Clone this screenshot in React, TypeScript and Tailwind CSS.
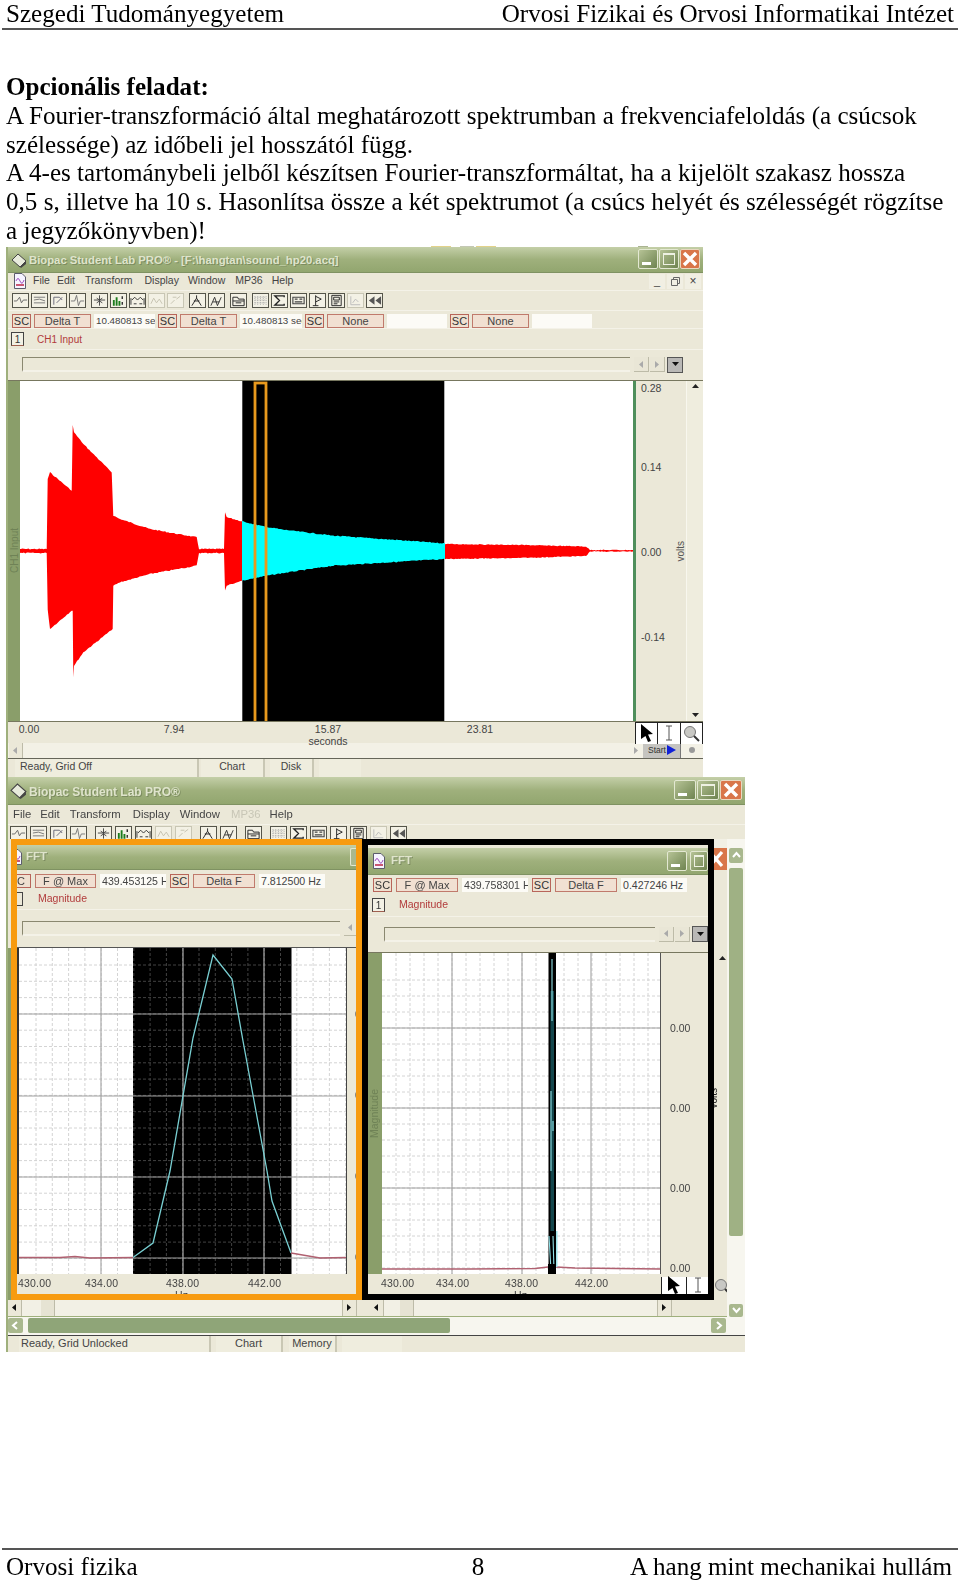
import React from "react";

const serif = "font-['Liberation_Serif',serif]";

/* ---------- waveform helpers ---------- */
type P = [number, number];
const z = (x: number, y: number): P => [x / 3, y / 3 + 370];
let seed = 7;
const rnd = () => {
  seed = (seed * 9301 + 49297) % 233280;
  return seed / 233280 - 0.5;
};
function jag(pts: P[], amp: number): P[] {
  const out: P[] = [];
  for (let i = 0; i < pts.length - 1; i++) {
    const [x0, y0] = pts[i];
    const [x1, y1] = pts[i + 1];
    const n = Math.max(1, Math.round(Math.abs(x1 - x0) / 1.5));
    for (let k = 0; k < n; k++) {
      const t = k / n;
      out.push([x0 + (x1 - x0) * t, y0 + (y1 - y0) * t + (Math.abs(x1 - x0) > 1.5 ? rnd() * amp : 0)]);
    }
  }
  out.push(pts[pts.length - 1]);
  return out;
}
const poly = (top: P[], bot: P[], amp = 1) =>
  [...jag(top, amp), ...jag(bot, amp).reverse()].map((p) => `${p[0].toFixed(1)},${p[1].toFixed(1)}`).join(" ");

const redA = poly(
  [z(58, 540), z(140, 540), z(143, 330), z(150, 310), z(215, 365), z(218, 168), z(222, 190), z(250, 225), z(335, 310), z(340, 440), z(360, 450), z(450, 480), z(590, 505), z(597, 540), z(672, 540), z(675, 430), z(680, 445), z(726, 457)],
  [z(58, 552), z(140, 552), z(143, 720), z(150, 780), z(215, 725), z(218, 725), z(220, 925), z(222, 890), z(250, 850), z(338, 780), z(340, 650), z(360, 640), z(450, 615), z(590, 590), z(597, 552), z(672, 552), z(675, 665), z(680, 650), z(726, 635)]
);
const cyan = poly(
  [z(726, 457), z(790, 472), z(850, 482), z(1000, 500), z(1335, 523)],
  [z(726, 635), z(790, 622), z(850, 612), z(1000, 590), z(1335, 570)]
);
const redC = poly(
  [[445, 545], [520, 546], [586, 547.5], [590, 551], [636, 551]],
  [[445, 560], [520, 559], [586, 557], [590, 552.5], [636, 552.5]],
  0.8
);

/* ---------- small chrome parts ---------- */
function WinBtns({ small = false }: { small?: boolean }) {
  const s = small ? "w-[20px] h-[20px]" : "w-[22px] h-[20px]";
  return (
    <div className="flex gap-[1px] items-center">
      <div className={`${s} rounded-[2px] border border-[#e3e8d2] bg-gradient-to-br from-[#b6c396] to-[#6f8450] flex items-end pl-[3px] pb-[3px]`}>
        <div className="w-[9px] h-[3px] bg-white" />
      </div>
      <div className={`${s} rounded-[2px] border border-[#e3e8d2] bg-gradient-to-br from-[#b6c396] to-[#6f8450] p-[3px]`}>
        <div className="w-full h-full border border-[#eef1e2] border-t-2" />
      </div>
      <div className={`${s} rounded-[2px] border border-[#e8d8c0] bg-[#d9764a] flex items-center justify-center`}>
        <svg width="16" height="16" viewBox="0 0 16 16">
          <path d="M2 2 L14 14 M14 2 L2 14" stroke="#fff" strokeWidth="3.4" />
        </svg>
      </div>
    </div>
  );
}

function DocIcon({ cls = "" }: { cls?: string }) {
  return (
    <svg width="14" height="16" viewBox="0 0 14 16" className={`shrink-0 ${cls}`}>
      <path d="M1.5 .5 H9 L12.5 4 V15.5 H1.5 Z" fill="#f6f4ff" stroke="#5c5c6c" />
      <path d="M3 8 Q5 3 7 8 T11 7" fill="none" stroke="#a050c0" />
      <path d="M3 12 H11" stroke="#c03050" strokeWidth="1.6" />
    </svg>
  );
}

const glyphs: Record<string, React.ReactNode> = {
  wave: <path d="M1 7 L4 7 L7 3 L9 9 L11 6 L15 6" fill="none" stroke="#666" />,
  lines: <path d="M2 3 H14 M2 6 L8 5 L14 7 M2 9 H14" fill="none" stroke="#777" />,
  pen: <path d="M3 11 V3 H9 L12 6 M6 9 L12 3" fill="none" stroke="#667" />,
  spike: <path d="M1 7 H5 L7 1 L9 12 L11 7 H15" fill="none" stroke="#777" />,
  cross: <path d="M8 1 V12 M2 6 H14 M5 4 L8 6 L11 4 M5 9 L8 7 L11 9" fill="none" stroke="#444" />,
  bars: (
    <>
      <path d="M3 12 V6 M6 12 V3 M9 12 V7" stroke="#1c7c1c" strokeWidth="2" />
      <path d="M12 2 V5 M12 8 V11" stroke="#222" strokeWidth="1.4" />
    </>
  ),
  hills: <path d="M1 4 V11 M15 4 V11 M2 6 L5 3 L8 6 L11 3 L14 6 M4 10 H7 M10 10 H13" fill="none" stroke="#333" />,
  dimA: <path d="M2 10 L5 4 L8 9 L11 5 L14 10" fill="none" stroke="#c5c2b0" />,
  dimB: <path d="M3 10 L7 6 M9 5 L13 2 M5 3 H9" fill="none" stroke="#c5c2b0" />,
  walk: <path d="M7 1 V4 M2 12 L7 4 L12 12 M4 7 H10" fill="none" stroke="#222" />,
  walk2: <path d="M2 12 L6 3 L9 12 L13 3 M4 8 H11" fill="none" stroke="#333" />,
  folder: <path d="M2 3 H7 L8 5 H14 V12 H2 Z M2 7 H14 M5 9 H11" fill="none" stroke="#222" />,
  table: <path d="M2 2 V11 M5 2 V11 M8 2 V11 M11 2 V11 M14 2 V11 M2 3 H14 M2 6 H14 M2 9 H14" stroke="#aaa" strokeDasharray="1 1" fill="none" />,
  sigma: <path d="M13 3 V1.5 H3 L8 6.5 L3 11.5 H13 V10" fill="none" stroke="#222" strokeWidth="1.4" />,
  calc: <path d="M2 3 H14 V10 H2 Z M4 5 H7 M9 5 H12 M4 8 H12" fill="none" stroke="#444" strokeWidth="1.2" />,
  flag: <path d="M6 1 V12 M3 12 H9 M6 2 L12 5 L6 8" fill="none" stroke="#222" />,
  journal: <path d="M3 1 H13 V12 H3 Z M5 3 H11 V6 H5 Z M5 8 H11 M5 10 H9" fill="none" stroke="#222" />,
  dimC: <path d="M3 2 V11 H13 M5 9 L8 5 L11 8" fill="none" stroke="#bbb" />,
  rew: <path d="M8 2 L2 6.5 L8 11 Z M15 2 L9 6.5 L15 11 Z" fill="#555" />,
};

function Tool({ g, dim = false }: { g: string; dim?: boolean }) {
  return (
    <div className={`w-[17px] h-[15px] border bg-[#f3f1e5] flex items-center justify-center ${dim ? "border-[#c8c6b4]" : "border-[#55554a]"}`}>
      <svg width="15" height="13" viewBox="0 0 16 13">{glyphs[g]}</svg>
    </div>
  );
}

function Toolbar({ wide = false }: { wide?: boolean }) {
  const gap = wide ? "gap-[3px]" : "gap-[2px]";
  const gapBig = wide ? "gap-[8px]" : "gap-[5px]";
  return (
    <div className={`flex ${gapBig}`}>
      <div className={`flex ${gap}`}>
        <Tool g="wave" /><Tool g="lines" /><Tool g="pen" /><Tool g="spike" />
      </div>
      <div className={`flex ${gap}`}>
        <Tool g="cross" /><Tool g="bars" /><Tool g="hills" /><Tool g="dimA" dim /><Tool g="dimB" dim />
      </div>
      <div className={`flex ${gap}`}>
        <Tool g="walk" /><Tool g="walk2" />
      </div>
      <Tool g="folder" />
      <div className={`flex ${gap}`}>
        <Tool g="table" /><Tool g="sigma" /><Tool g="calc" /><Tool g="flag" /><Tool g="journal" /><Tool g="dimC" dim /><Tool g="rew" />
      </div>
    </div>
  );
}

function Sc({ cls = "w-[19px]" }: { cls?: string }) {
  return (
    <div className={`${cls} h-[14px] border border-[#b8655a] bg-[#efe0d0] text-[11px] leading-[12px] text-center text-[#333]`}>SC</div>
  );
}
function Fn({ t, cls }: { t: string; cls: string }) {
  return (
    <div className={`${cls} h-[14px] border border-[#c07a6c] bg-[#f1e0d2] text-[11px] leading-[12px] text-center text-[#444]`}>{t}</div>
  );
}
function Val({ t = "", cls }: { t?: string; cls: string }) {
  return (
    <div className={`${cls} h-[14px] bg-[#fcfbf6] leading-[14px] pl-[2px] text-[#444] overflow-hidden whitespace-nowrap`}>{t}</div>
  );
}
function Num1({ cls = "" }: { cls?: string }) {
  return (
    <div className={`w-[13px] h-[14px] border border-[#444] border-b-[#a06050] bg-[#f3f1e5] text-[10px] leading-[13px] text-center text-[#333] ${cls}`}>1</div>
  );
}
function Tri({ d, c = "#999" }: { d: "l" | "r" | "u" | "d"; c?: string }) {
  const path = { l: "M6 1 L2 4.5 L6 8 Z", r: "M2 1 L6 4.5 L2 8 Z", u: "M1 6 L4.5 2 L8 6 Z", d: "M1 2 L4.5 6 L8 2 Z" }[d];
  return (
    <svg width="9" height="9" viewBox="0 0 9 9">
      <path d={path} fill={c} />
    </svg>
  );
}
function NavBtns() {
  return (
    <div className="flex gap-[1px] items-center">
      <div className="w-[15px] h-[15px] bg-[#e9e6d6] border-r border-b border-[#bdbba8] flex items-center justify-center"><Tri d="l" c="#aaa" /></div>
      <div className="w-[15px] h-[15px] bg-[#e9e6d6] border-r border-b border-[#bdbba8] flex items-center justify-center"><Tri d="r" c="#aaa" /></div>
      <div className="w-[16px] h-[16px] ml-[1px] bg-[#b9b8b6] border border-[#555] flex items-center justify-center"><Tri d="d" c="#111" /></div>
    </div>
  );
}
function ArrowCursor() {
  return (
    <svg width="16" height="20" viewBox="0 0 16 20">
      <path d="M2 1 L14 11 L9 11.5 L12 18 L9 19 L6.5 13 L2 16 Z" fill="#000" />
    </svg>
  );
}
function IBeam() {
  return (
    <svg width="10" height="16" viewBox="0 0 10 16">
      <path d="M2 1 H8 M5 1 V15 M2 15 H8" stroke="#555" fill="none" />
    </svg>
  );
}
function Glass() {
  return (
    <svg width="17" height="17" viewBox="0 0 17 17">
      <circle cx="7" cy="7" r="5.5" fill="#c8c8c4" stroke="#777" />
      <path d="M11 11 L16 16" stroke="#333" strokeWidth="2" />
    </svg>
  );
}
function Ornaments() {
  return (
    <div className="flex h-[1px] overflow-hidden">
      <div className="ml-[431px] w-[20px] bg-[#e2d28a]" />
      <div className="ml-[9px] w-[14px] bg-[#c4c8b4]" />
      <div className="ml-[2px] w-[20px] bg-[#e2d28a]" />
      <div className="ml-[142px] w-[10px] bg-[#aab492]" />
    </div>
  );
}

const titleGrad = "bg-gradient-to-b from-[#c4cfa8] via-[#9fb07c] to-[#92a66f] border-b border-[#7f9262]";
const titleText = "font-['Liberation_Sans',sans-serif] font-bold text-[#dfe4cc] [text-shadow:1px_1px_0_#7c8c60]";

/* ---------- first window ---------- */
function Window1() {
  return (
    <div className="ml-[6px] w-[697px] flex flex-col bg-[#ebe8d8] border-l-2 border-[#9fb07c] text-[#444] font-['Liberation_Sans',sans-serif] overflow-hidden">
      {/* title */}
      <div className={`h-[26px] flex items-center justify-between pl-[3px] pr-[3px] ${titleGrad}`}>
        <div className="flex items-center gap-[2px] mt-[3px]">
          <svg width="16" height="16" viewBox="0 0 16 16">
            <path d="M1 7 L7 1 L15 8 L9 14 Z" fill="#e8ebdc" stroke="#444" />
            <path d="M9 14 L15 8 L15 11 L10 15 Z" fill="#444" />
          </svg>
          <span className={`text-[11.3px] ${titleText}`}>Biopac Student Lab PRO® - [F:\hangtan\sound_hp20.acq]</span>
        </div>
        <WinBtns small />
      </div>
      {/* menu */}
      <div className="h-[18px] flex items-center pl-[5px] text-[10.5px] border-b border-[#f4f2e8]">
        <DocIcon />
        <span className="ml-[6px]">File</span>
        <span className="ml-[7px]">Edit</span>
        <span className="ml-[10px]">Transform</span>
        <span className="ml-[12px]">Display</span>
        <span className="ml-[9px]">Window</span>
        <span className="ml-[10px]">MP36</span>
        <span className="ml-[9px]">Help</span>
        <div className="ml-auto flex gap-[2px] mr-[2px]">
          <div className="w-[16px] h-[15px] bg-[#f1efe3] text-center text-[11px] leading-[15px]">_</div>
          <div className="w-[16px] h-[15px] bg-[#f1efe3] flex items-center justify-center">
            <svg width="9" height="9" viewBox="0 0 9 9"><path d="M2.5 2.5 V.5 H8.5 V6.5 H6.5 M.5 2.5 H6.5 V8.5 H.5 Z" fill="none" stroke="#666" /></svg>
          </div>
          <div className="w-[16px] h-[15px] bg-[#f1efe3] text-center text-[12px] leading-[14px]">×</div>
        </div>
      </div>
      {/* toolbar */}
      <div className="h-[20px] pl-[4px] pt-[2px] border-b border-[#f4f2e8]">
        <Toolbar />
      </div>
      {/* SC row */}
      <div className="h-[18px] pl-[4px] pt-[3px] flex gap-[3px] border-b border-[#f4f2e8] text-[9.8px]">
        <Sc /><Fn t="Delta T" cls="w-[57px]" /><Val t="10.480813 sec" cls="w-[61px]" />
        <Sc /><Fn t="Delta T" cls="w-[57px]" /><Val t="10.480813 sec" cls="w-[62px]" />
        <Sc /><Fn t="None" cls="w-[57px]" /><Val cls="w-[60px]" />
        <Sc /><Fn t="None" cls="w-[57px]" /><Val cls="w-[60px]" />
      </div>
      {/* channel row */}
      <div className="h-[21px] pl-[3px] pt-[1px] flex items-center border-b border-[#f4f2e8]">
        <Num1 />
        <span className="ml-[13px] text-[10px] text-[#b23b3b]">CH1 Input</span>
      </div>
      {/* scroll row */}
      <div className="h-[31px] flex items-center pl-[14px] pr-[18px] border-b border-[#77775f]">
        <div className="w-[608px] h-[15px] border-t border-l border-[#8a8870] border-b-2 border-b-[#f4f2e8]" />
        <div className="ml-[4px]"><NavBtns /></div>
      </div>
      {/* plot */}
      <div className="h-[340px] flex">
        <div className="w-[12px] shrink-0 bg-[#8a9e6a] flex items-center justify-center">
          <span className="[writing-mode:vertical-rl] rotate-180 text-[10px] text-[#6f8256]">CH1 Input</span>
        </div>
        <svg width="613" height="340" viewBox="20 382 613 340" className="block bg-white shrink-0">
          <rect x="242.3" y="382" width="202" height="340" fill="#000" />
          <polygon points={redA} fill="#ff0000" />
          <polygon points={cyan} fill="#00ffff" />
          <polygon points={redC} fill="#ff0000" />
          <rect x="255" y="384" width="11" height="340" fill="none" stroke="#e8991d" strokeWidth="2.8" />
        </svg>
        <div className="w-[3px] shrink-0 bg-[#4f8f5c]" />
        <div className="flex-1 flex">
          <div className="w-[38px] pl-[5px] text-[10.5px] leading-[14px] text-[#444]">
            <div>0.28</div>
            <div className="mt-[65px]">0.14</div>
            <div className="mt-[71px]">0.00</div>
            <div className="mt-[71px]">-0.14</div>
          </div>
          <div className="w-[12px] flex items-center justify-center">
            <span className="[writing-mode:vertical-rl] rotate-180 text-[10px] text-[#555]">volts</span>
          </div>
          <div className="flex-1 bg-[#efedde] flex flex-col justify-between items-center py-[1px] border-l border-[#f8f7ee]">
            <Tri d="u" c="#222" />
            <Tri d="d" c="#222" />
          </div>
        </div>
      </div>
      {/* axis */}
      <div className="relative z-10 h-[22px] flex border-t border-[#77775f] text-[10.5px] leading-[12px] text-[#444]">
        <div className="ml-[1px] w-[40px] pt-[1px] text-center">0.00</div>
        <div className="ml-[105px] w-[40px] pt-[1px] text-center">7.94</div>
        <div className="ml-[104px] w-[60px] pt-[1px] text-center">
          <div>15.87</div>
          <div>seconds</div>
        </div>
        <div className="ml-[102px] w-[40px] pt-[1px] text-center">23.81</div>
        <div className="ml-auto flex">
          <div className="w-[23px] h-[22px] bg-white border-x border-t border-[#222] flex items-center justify-center"><ArrowCursor /></div>
          <div className="w-[23px] h-[22px] bg-white border-r border-t border-[#222] flex items-center justify-center"><IBeam /></div>
          <div className="w-[22px] h-[22px] bg-white border-r border-t border-[#222] flex items-center justify-center"><Glass /></div>
        </div>
      </div>
      {/* scrollbar */}
      <div className="h-[16px] flex items-center bg-[#f3f1e6] border-b border-[#66665a]">
        <div className="ml-[1px] w-[14px] h-[15px] bg-[#ebe8d8] border-r border-[#bdbba8] flex items-center justify-center"><Tri d="l" c="#aaa" /></div>
        <div className="ml-auto w-[14px] h-[15px] flex items-center justify-center"><Tri d="r" c="#aaa" /></div>
        <div className="w-[38px] h-[15px] bg-[#c5c4c0] border-r border-[#777] text-[8.5px] leading-[14px] pl-[5px] flex items-center gap-[1px] text-[#333]">
          Start
          <svg width="9" height="10" viewBox="0 0 9 10"><path d="M0 0 L9 5 L0 10 Z" fill="#1020d8" /></svg>
        </div>
        <div className="w-[22px] flex items-center justify-center"><div className="w-[6px] h-[6px] rounded-full bg-[#999]" /></div>
      </div>
      {/* status */}
      <div className="h-[18px] flex text-[10.5px] leading-[14px] text-[#444]">
        <div className="ml-[7px] w-[184px] pl-[5px] bg-[#efedde] border-r-2 border-[#c9c7b4]">Ready, Grid Off</div>
        <div className="ml-[2px] w-[64px] text-center bg-[#efedde] border-r-2 border-[#c9c7b4]">Chart</div>
        <div className="ml-[5px] w-[44px] text-center bg-[#efedde] border-r-2 border-[#c9c7b4]">Disk</div>
        <div className="ml-[5px] w-[42px] bg-[#efedde]" />
      </div>
    </div>
  );
}

/* ---------- FFT charts ---------- */
function Grid({ x0, x1, y0, y1, majorX, majorY, minorX, minorY, dark }: { x0: number; x1: number; y0: number; y1: number; majorX: number[]; majorY: number[]; minorX: number[]; minorY: number[]; dark?: [number, number] }) {
  return (
    <>
      {minorX.map((x) => (
        <line key={"vx" + x} x1={x} x2={x} y1={y0} y2={y1} stroke="#cfcfcf" strokeDasharray="3 2" strokeWidth="0.9" />
      ))}
      {minorY.map((y) => (
        <line key={"hy" + y} x1={x0} x2={x1} y1={y} y2={y} stroke="#cfcfcf" strokeDasharray="3 2" strokeWidth="0.9" />
      ))}
      {dark && <rect x={dark[0]} y={y0} width={dark[1] - dark[0]} height={y1 - y0} fill="#000" />}
      {dark &&
        minorX
          .filter((x) => x > dark[0] && x < dark[1])
          .map((x) => <line key={"dvx" + x} x1={x} x2={x} y1={y0} y2={y1} stroke="#4a4a4a" strokeDasharray="3 2" strokeWidth="0.9" />)}
      {dark &&
        minorY.map((y) => (
          <line key={"dhy" + y} x1={dark[0]} x2={dark[1]} y1={y} y2={y} stroke="#4a4a4a" strokeDasharray="3 2" strokeWidth="0.9" />
        ))}
      {majorX.map((x) => (
        <line key={"mx" + x} x1={x} x2={x} y1={y0} y2={y1} stroke="#aaa" strokeWidth="1.2" />
      ))}
      {majorY.map((y) => (
        <line key={"my" + y} x1={x0} x2={x1} y1={y} y2={y} stroke="#a0a0a0" strokeWidth="1.2" />
      ))}
    </>
  );
}
const range = (a: number, b: number, s: number) => {
  const r: number[] = [];
  for (let v = a; v < b; v += s) r.push(Math.round(v * 10) / 10);
  return r;
};

function ChartLeft() {
  return (
    <svg width="327" height="326" viewBox="19 947 327 326" className="block bg-white shrink-0">
      <Grid x0={19} x1={346} y0={947} y1={1273} majorX={[101, 183, 264]} majorY={[1013, 1095, 1176, 1257]} minorX={range(36, 346, 16.3)} minorY={range(964, 1273, 16.3)} dark={[133, 291.5]} />
      <polyline points="19,1256.5 60,1256.5 75,1255.5 90,1257 133,1256.5" fill="none" stroke="#b06070" strokeWidth="1.3" />
      <polyline points="133,1256.5 153,1242 170,1170 193,1037 213,954 232,978 243,1040 267,1170 272,1200 291,1252" fill="none" stroke="#79cfd2" strokeWidth="1.3" />
      <polyline points="291,1252 320,1257 346,1256.5" fill="none" stroke="#b06070" strokeWidth="1.3" />
    </svg>
  );
}
function ChartRight() {
  return (
    <svg width="278" height="321" viewBox="382 952 278 321" className="block bg-white shrink-0">
      <Grid x0={382} x1={660} y0={952} y1={1273} majorX={[452, 522, 591]} majorY={[1027, 1107, 1187]} minorX={range(396, 660, 14)} minorY={range(979, 1273, 16)} />
      <polyline points="382,1268 470,1268 535,1267.5 548,1266 556,1266 575,1267 660,1268" fill="none" stroke="#b06070" strokeWidth="1.3" />
      <rect x="548.5" y="952" width="7.5" height="321" fill="#000" />
      <rect x="550.5" y="990" width="3.5" height="240" fill="#14474d" />
      <path d="M552 958 V1020 M551 1090 V1170 M553 1120 V1130 M549 1235 L551 1270 M554 1270 L553 1235" fill="none" stroke="#8fe0e6" strokeWidth="1.1" />
      <rect x="556" y="1230" width="1.5" height="36" fill="#9fe4ea" />
      <rect x="548" y="1263" width="8" height="10" fill="#000" />
    </svg>
  );
}

function Window2() {
  return (
    <div className="ml-[6px] w-[739px] flex flex-col bg-[#ebe8d8] border-l-2 border-[#9fb07c] text-[#444] font-['Liberation_Sans',sans-serif] overflow-hidden">
      {/* title */}
      <div className={`h-[28px] flex items-center justify-between pl-[2px] pr-[3px] ${titleGrad}`}>
        <div className="flex items-center gap-[2px] mt-[3px]">
          <svg width="17" height="17" viewBox="0 0 16 16">
            <path d="M1 7 L7 1 L15 8 L9 14 Z" fill="#e8ebdc" stroke="#444" />
            <path d="M9 14 L15 8 L15 11 L10 15 Z" fill="#444" />
          </svg>
          <span className={`text-[12px] ${titleText}`}>Biopac Student Lab PRO®</span>
        </div>
        <WinBtns />
      </div>
      {/* menu */}
      <div className="h-[20px] flex items-center pl-[5px] text-[11.3px] border-b border-[#f4f2e8]">
        <span>File</span>
        <span className="ml-[9px]">Edit</span>
        <span className="ml-[10px]">Transform</span>
        <span className="ml-[12px]">Display</span>
        <span className="ml-[10px]">Window</span>
        <span className="ml-[11px] text-[#c8c6b6]">MP36</span>
        <span className="ml-[9px]">Help</span>
      </div>
      {/* toolbar clipped by FFT windows */}
      <div className="h-[14px] pl-[2px] pt-[1px] overflow-hidden">
        <Toolbar wide />
      </div>
      {/* MDI client area */}
      <div className="flex">
        <div className="w-[719px] flex flex-col">
          <div className="flex h-[461px]">
            {/* gutter */}
            <div className="w-[3px] flex flex-col">
              <div className="h-[109px]" />
              <div className="flex-1 bg-[#8a9e6a]" />
            </div>
            {/* orange FFT */}
            <div className="w-[351px] h-[461px] border-[6px] border-[#f79b10] flex flex-col overflow-hidden bg-[#ebe8d8]">
              <div className={`h-[25px] shrink-0 flex items-center justify-between ${titleGrad}`}>
                <div className="flex items-center gap-[3px]">
                  <DocIcon cls="-ml-[8px]" />
                  <span className={`text-[11.5px] ${titleText}`}>FFT</span>
                </div>
                <div className="w-[6px] h-[18px] rounded-l-[2px] border border-r-0 border-[#e3e8d2] bg-[#a9b88e]" />
              </div>
              <div className="h-[20px] shrink-0 pt-[4px] flex gap-[4px] text-[#444] text-[10.6px]">
                <div className="w-[14px] h-[14px] border-y border-r border-[#b8655a] bg-[#efe0d0] text-[11px] leading-[12px]">C</div>
                <Fn t="F @ Max" cls="w-[61px]" />
                <Val t="439.453125 H" cls="w-[66px]" />
                <Sc />
                <Fn t="Delta F" cls="w-[62px]" />
                <Val t="7.812500 Hz" cls="w-[66px]" />
              </div>
              <div className="h-[20px] shrink-0 flex items-center border-b border-[#f4f2e8]">
                <div className="w-[6px] h-[14px] border-y border-r border-[#444]" />
                <span className="ml-[15px] text-[10.5px] text-[#b23b3b]">Magnitude</span>
              </div>
              <div className="h-[38px] shrink-0 flex items-center pl-[5px] border-b border-[#555]">
                <div className="w-[320px] h-[15px] border-t border-l border-[#8a8870] border-b-2 border-b-[#f4f2e8]" />
                <div className="ml-[4px] w-[12px] h-[15px] border-b border-[#bdbba8] flex items-center justify-center"><Tri d="l" c="#aaa" /></div>
              </div>
              <div className="flex h-[326px] shrink-0">
                <div className="w-[2px] shrink-0 bg-[#333]" />
                <ChartLeft />
                <div className="flex-1 overflow-hidden border-l border-[#444] pl-[8px] text-[10.5px] leading-[14px] whitespace-nowrap">
                  <div className="mt-[59px]">0.00</div>
                  <div className="mt-[67px]">0.00</div>
                  <div className="mt-[67px]">0.00</div>
                  <div className="mt-[67px]">0.00</div>
                </div>
              </div>
              <div className="flex-1 flex text-[10.5px] leading-[12px] tracking-[.2px] overflow-hidden bg-[#ebe8d8] pt-[3px]">
                <div className="ml-[1px] w-[31px]">430.00</div>
                <div className="ml-[36px] w-[31px]">434.00</div>
                <div className="ml-[50px] w-[31px] text-center">
                  <div>438.00</div>
                  <div>Hz</div>
                </div>
                <div className="ml-[51px] w-[31px]">442.00</div>
              </div>
            </div>
            {/* black FFT */}
            <div className="w-[352px] h-[461px] border-[6px] border-black flex flex-col overflow-hidden bg-[#ebe8d8]">
              <div className={`h-[27px] mt-[3px] shrink-0 flex items-center pl-[4px] justify-between ${titleGrad}`}>
                <div className="flex items-center gap-[5px]">
                  <DocIcon />
                  <span className={`text-[11.5px] ${titleText}`}>FFT</span>
                </div>
                <div className="flex gap-[3px]">
                  <div className="w-[20px] h-[20px] rounded-[2px] border border-[#e3e8d2] bg-gradient-to-br from-[#b6c396] to-[#6f8450] flex items-end pl-[3px] pb-[3px]">
                    <div className="w-[9px] h-[3px] bg-white" />
                  </div>
                  <div className="w-[18px] h-[20px] rounded-[2px] border border-[#e3e8d2] bg-gradient-to-br from-[#b6c396] to-[#6f8450] p-[3px]">
                    <div className="w-full h-full border border-[#eef1e2] border-t-2" />
                  </div>
                </div>
              </div>
              <div className="h-[20px] shrink-0 pt-[3px] pl-[5px] flex gap-[4px] text-[10.6px]">
                <Sc />
                <Fn t="F @ Max" cls="w-[62px]" />
                <Val t="439.758301 H" cls="w-[66px]" />
                <Sc />
                <Fn t="Delta F" cls="w-[62px]" />
                <Val t="0.427246 Hz" cls="w-[66px]" />
              </div>
              <div className="h-[22px] shrink-0 pl-[4px] flex items-center border-b border-[#f4f2e8]">
                <Num1 />
                <span className="ml-[14px] text-[10.5px] text-[#b23b3b]">Magnitude</span>
              </div>
              <div className="h-[36px] shrink-0 flex items-center pl-[16px] border-b border-[#77775f]">
                <div className="w-[273px] h-[15px] border-t border-l border-[#8a8870] border-b-2 border-b-[#f4f2e8]" />
                <div className="ml-[4px]"><NavBtns /></div>
              </div>
              <div className="flex h-[321px] shrink-0">
                <div className="w-[14px] shrink-0 bg-[#8a9e6a] flex items-center justify-center">
                  <span className="[writing-mode:vertical-rl] rotate-180 text-[10.5px] text-[#6f8256]">Magnitude</span>
                </div>
                <ChartRight />
                <div className="flex-1 border-l border-[#555] pl-[9px] text-[10.5px] leading-[14px]">
                  <div className="mt-[68px]">0.00</div>
                  <div className="mt-[66px]">0.00</div>
                  <div className="mt-[66px]">0.00</div>
                  <div className="mt-[66px]">0.00</div>
                </div>
              </div>
              <div className="flex-1 flex text-[10.5px] leading-[12px] tracking-[.2px] overflow-hidden pt-[3px]">
                <div className="ml-[13px] w-[31px]">430.00</div>
                <div className="ml-[24px] w-[31px]">434.00</div>
                <div className="ml-[38px] w-[31px] text-center">
                  <div>438.00</div>
                  <div>Hz</div>
                </div>
                <div className="ml-[39px] w-[31px]">442.00</div>
                <div className="ml-auto flex">
                  <div className="w-[26px] bg-white border-x border-[#222] flex items-center justify-center"><ArrowCursor /></div>
                  <div className="w-[21px] bg-white flex items-center justify-center"><IBeam /></div>
                </div>
              </div>
            </div>
            {/* strip between black box and window scrollbar */}
            <div className="flex-1 flex flex-col items-center bg-[#ebe8d8] overflow-hidden">
              <div className="h-[9px] w-full bg-[#f2f0e5]" />
              <div className="h-[22px] w-full bg-[#d9764a] flex items-center justify-start overflow-hidden">
                <svg width="10" height="18" viewBox="0 0 10 18"><path d="M-4 2 L8 16 M8 2 L-4 16" stroke="#fff" strokeWidth="3.2" /></svg>
              </div>
              <div className="h-[84px]" />
              <div className="self-end"><Tri d="u" c="#222" /></div>
              <div className="mt-[125px] self-start -ml-[5px] [writing-mode:vertical-rl] rotate-180 text-[10px] leading-[10px] text-[#222]">volts</div>
              <div className="flex-1" />
              <div className="mb-[5px] -mr-[4px] self-end"><Glass /></div>
            </div>
          </div>
          {/* FFT horizontal scrollbars */}
          <div className="h-[17px] flex bg-[#ebe8d8] border-b border-[#9fb07c]">
            <div className="w-[349px] flex bg-[#f2f0e5] border-r border-[#bdbba8]">
              <div className="w-[14px] bg-[#ebe8d8] border-r border-[#bdbba8] flex items-center justify-center"><Tri d="l" c="#111" /></div>
              <div className="ml-[19px] w-[14px] bg-[#e6e3d3] border-r border-[#bdbba8]" />
              <div className="ml-auto w-[14px] bg-[#ebe8d8] border-l border-[#bdbba8] flex items-center justify-center"><Tri d="r" c="#111" /></div>
            </div>
            <div className="ml-[13px] w-[302px] flex bg-[#f2f0e5] border-r border-[#bdbba8]">
              <div className="w-[14px] bg-[#ebe8d8] border-r border-[#bdbba8] flex items-center justify-center"><Tri d="l" c="#111" /></div>
              <div className="ml-[16px] w-[14px] bg-[#e6e3d3] border-r border-[#bdbba8]" />
              <div className="ml-auto w-[14px] bg-[#ebe8d8] border-l border-[#bdbba8] flex items-center justify-center"><Tri d="r" c="#111" /></div>
            </div>
          </div>
          {/* window horizontal scrollbar */}
          <div className="h-[18px] flex items-center bg-[#f7f6ef]">
            <div className="w-[15px] h-[15px] rounded-[2px] bg-[#a9b88e] flex items-center justify-center">
              <svg width="9" height="9" viewBox="0 0 9 9"><path d="M6 1 L2 4.5 L6 8" fill="none" stroke="#fff" strokeWidth="2" /></svg>
            </div>
            <div className="ml-[5px] w-[422px] h-[15px] rounded-[2px] bg-[#8fa578]" />
            <div className="ml-auto w-[15px] h-[15px] rounded-[2px] bg-[#a9b88e] flex items-center justify-center">
              <svg width="9" height="9" viewBox="0 0 9 9"><path d="M3 1 L7 4.5 L3 8" fill="none" stroke="#fff" strokeWidth="2" /></svg>
            </div>
            <div className="w-[1px]" />
          </div>
        </div>
        {/* window vertical scrollbar */}
        <div className="flex-1 flex flex-col items-center bg-[#f7f6ef] pt-[9px] pb-[18px]">
          <div className="w-[14px] h-[15px] rounded-[2px] bg-[#a9b88e] flex items-center justify-center">
            <svg width="9" height="9" viewBox="0 0 9 9"><path d="M1 6 L4.5 2 L8 6" fill="none" stroke="#fff" strokeWidth="2" /></svg>
          </div>
          <div className="mt-[5px] w-[14px] h-[368px] rounded-[2px] bg-[#9fb184]" />
          <div className="mt-auto w-[14px] h-[13px] rounded-[2px] bg-[#a9b88e] flex items-center justify-center">
            <svg width="9" height="9" viewBox="0 0 9 9"><path d="M1 2 L4.5 6 L8 2" fill="none" stroke="#fff" strokeWidth="2" /></svg>
          </div>
        </div>
      </div>
      {/* status */}
      <div className="h-[17px] flex border-t border-[#444] text-[11px] leading-[15px] text-[#444] bg-[#ebe8d8]">
        <div className="ml-[11px] w-[192px] pl-[2px] bg-[#efedde] border-r-2 border-[#c9c7b4]">Ready, Grid Unlocked</div>
        <div className="ml-[5px] w-[67px] text-center bg-[#efedde] border-r-2 border-[#c9c7b4]">Chart</div>
        <div className="ml-[6px] w-[48px] text-center bg-[#efedde] border-r-2 border-[#c9c7b4]">Memory</div>
        <div className="ml-[5px] w-[60px] bg-[#efedde]" />
      </div>
    </div>
  );
}

export default function App() {
  return (
    <div className={`relative w-[960px] h-[1583px] bg-white text-black overflow-hidden flex flex-col ${serif}`}>
      <header className="mx-[2px] h-[30px] border-b-2 border-[#555] flex justify-between px-[4px] text-[25.1px] leading-[27px] shrink-0 whitespace-nowrap blur-[0.25px]">
        <span>Szegedi Tudományegyetem</span>
        <span>Orvosi Fizikai és Orvosi Informatikai Intézet</span>
      </header>
      <main className="mt-[43px] px-[6px] text-[25.1px] leading-[28.8px] shrink-0 whitespace-nowrap blur-[0.25px]">
        <div className="font-bold">Opcionális feladat:</div>
        <div>A Fourier-transzformáció által meghatározott spektrumban a frekvenciafeloldás (a csúcsok</div>
        <div>szélessége) az időbeli jel hosszától függ.</div>
        <div>A 4-es tartománybeli jelből készítsen Fourier-transzformáltat, ha a kijelölt szakasz hossza</div>
        <div>0,5 s, illetve ha 10 s. Hasonlítsa össze a két spektrumot (a csúcs helyét és szélességét rögzítse</div>
        <div>a jegyzőkönyvben)!</div>
      </main>
      <div className="blur-[0.35px] shrink-0 flex flex-col">
        <Ornaments />
        <Window1 />
        <Window2 />
      </div>
      <footer className="mt-auto mx-[2px] mb-[2px] h-[33px] border-t-2 border-[#555] flex justify-between pl-[4px] pr-[8px] pt-[2px] text-[25.1px] leading-[30px] shrink-0 whitespace-nowrap blur-[0.25px]">
        <span className="w-[320px]">Orvosi fizika</span>
        <span>8</span>
        <span className="w-[320px] text-right">A hang mint mechanikai hullám</span>
      </footer>
    </div>
  );
}
